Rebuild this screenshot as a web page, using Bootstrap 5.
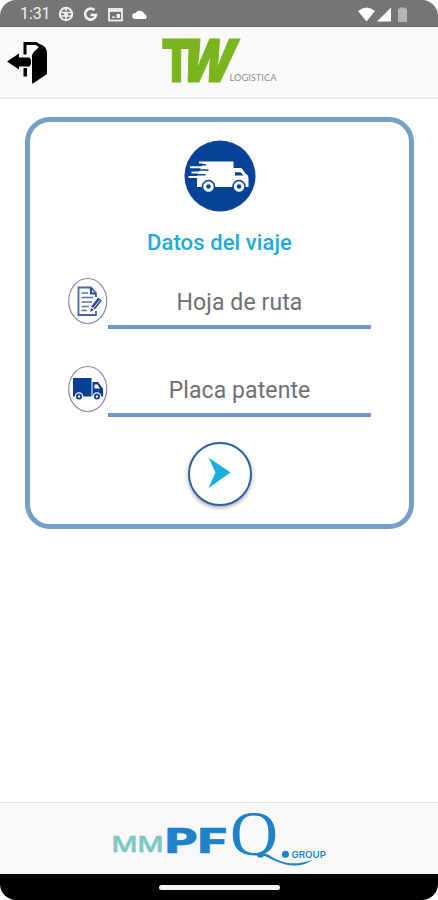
<!DOCTYPE html>
<html lang="es">
<head>
<meta charset="utf-8">
<meta name="viewport" content="width=device-width, initial-scale=1">
<title>Datos del viaje</title>
<link href="https://cdn.jsdelivr.net/npm/bootstrap@5.3.0/dist/css/bootstrap.min.css" rel="stylesheet">
<style>
body{font-family:Roboto,sans-serif;background:#fff}
svg{display:block;flex:none;overflow:visible}
.phone{width:438px;height:900px}
.statusbar{height:27px;background:#757575;border-bottom:1px solid #686868;border-radius:16px 16px 0 0;padding:1px 30px 0 20px;color:#f1f1f1}
.clock{font-size:16px;letter-spacing:-.1px;line-height:26px;width:38px}
.topbar{height:72px;background:#f9f9f9;border-bottom:2px solid #ececec}
.trip{margin:18px 24px 0 25px;height:412px;border:5px solid #759fc9;border-radius:25px;padding-top:18px}
.trip h1{font-size:22px;line-height:28px;letter-spacing:.1px;color:#22abd6;margin:17px 0 0;font-weight:500}
.field{padding:0 38px;height:51px}
.field .form-control{width:263px;height:51px;border:0;border-bottom:4px solid #6e99c8;border-radius:0;background:none;padding:2px 0 0;text-align:center;font-size:23px;letter-spacing:.1px;color:#666;box-shadow:none}
.field .form-control::placeholder{color:#707070;opacity:1}
.go{width:64px;height:64px;border:2px solid #2c62a7;background:#fff;box-shadow:0 2px 4px #0005}
.brandbar{height:72px;background:#f8f8f8;border-top:1px solid #e6e6e6}
.navpill{height:26px;background:#000;border-radius:0 0 16px 16px}
.navpill span{width:121px;height:5px;background:#f2f2f2}
</style>
<script src="https://cdn.jsdelivr.net/npm/bootstrap@5.3.0/dist/js/bootstrap.bundle.min.js"></script>
</head>
<body>
<div class="phone d-flex flex-column overflow-hidden">
  <div class="statusbar d-flex align-items-center flex-shrink-0">
    <span class="clock">1:31</span>
    <svg width="92" height="26" viewBox="58 0 92 26" fill="none" stroke="#f1f1f1" stroke-width="2">
      <circle cx="66" cy="13" r="6.2"/><path d="M60 11.500h12M60 15h12M66 7v3M66 15v4" stroke-width="1.600"/><circle cx="66" cy="13" r="2" fill="#f1f1f1" stroke="none"/>
      <path d="M94.500 9.200A5.500 5.500 0 1 0 96 14H90.500" stroke-width="2.600"/>
      <rect x="109" y="8" width="13" height="11.500" stroke-width="1.800"/><path d="M109 9.800h13" stroke-width="2"/><path d="M112 16.200h3" stroke-width="1.400"/><path d="M116.500 13h3.500v4h-3.500z" fill="#f1f1f1" stroke="none"/>
      <path d="M135 18a3 3 0 0 1 .5-6 5 5 0 0 1 8.700.8 3 3 0 0 1 1.500 5.200z" fill="#fff" stroke="none"/>
    </svg>
    <svg class="ms-auto" width="51" height="26" viewBox="357 0 51 26" fill="#fff">
      <path d="M358 10q8.500-7 17 0l-8.500 10.500zM391 6.500v14h-14z"/><path d="M398 7.500h2V6.500h5v1h2V21h-9z" fill="#b5b5b5"/>
    </svg>
  </div>

  <header class="topbar d-flex flex-shrink-0">
    <svg width="438" height="70" viewBox="0 27 438 70">
      <path d="M7 61.500 19 53.500V57.500H29.500L31 60V64L29.500 66.500H19V69.500z"/>
      <path d="M25 54.500V43.500H36L45 49" fill="none" stroke="#000" stroke-width="3"/>
      <path d="M23.500 68H27V76.500H23.500zM32 55Q33 52 37 49L41 44.500Q47 47 47 53V74L33 83.500H32z"/>
      <g fill="#7ab51d" stroke="#7ab51d" stroke-width="1" font-family="Inter,sans-serif" font-weight="900">
        <text x="161.500" y="81.500" font-size="59" textLength="30" lengthAdjust="spacingAndGlyphs">T</text>
        <text transform="translate(177.500 81.500) skewX(-14)" font-size="59" textLength="53" lengthAdjust="spacingAndGlyphs">W</text>
      </g>
      <text x="229.500" y="81" font-family="Lato,sans-serif" font-size="9" fill="#919191" textLength="47" lengthAdjust="spacingAndGlyphs">LOGISTICA</text>
    </svg>
  </header>

  <main class="flex-grow-1">
    <section class="trip d-flex flex-column align-items-center">
      <svg width="72" height="72" viewBox="184 140 72 72">
        <circle cx="220" cy="176" r="35.500" fill="#064399"/>
        <path d="M199 161.500H233.500V168H241.500L246 174Q248.500 175 248.500 178V187H197V175.500L203 163.500H199z" fill="#fff"/>
        <path d="M195 164.700H206M195 170H208.500M195 174.800H205.500" stroke="#064399" stroke-width="1.600" fill="none"/>
        <path d="M190 167.300H208M191.500 172.400H210M188.500 177H204" stroke="#fff" stroke-width="2" fill="none"/>
        <path d="M235 172.300H240.500L243.500 175.500H235z" fill="#064399"/>
        <g fill="#fff" stroke="#064399" stroke-width="1.500"><circle cx="208.500" cy="186.500" r="6"/><circle cx="239" cy="186.500" r="6"/></g>
        <g fill="#064399"><circle cx="208.500" cy="186.500" r="2.200"/><circle cx="239" cy="186.500" r="2.200"/></g>
      </svg>
      <h1>Datos del viaje</h1>
      <div class="field d-flex w-100" style="margin-top:21px">
        <svg width="40" height="47" viewBox="0 0 40 47" fill="none" stroke="#2c4b98">
          <ellipse cx="19.700" cy="23" rx="19" ry="22.500" stroke="#8589b5" stroke-width="1.200"/>
          <path d="M28 19V15L23 9.500H10.500V37H28V33" stroke-width="1.800" stroke="#4965a5"/><path d="M23 9.500V15.500H28" stroke-width="2.200"/>
          <path d="M13.500 15H20M13.500 19.500H25M13.500 24H24M13.500 28.500H21M13.500 32.500H19" stroke-width="1.700" stroke="#5874ae"/>
          <path d="M25 30 32 21" stroke-width="4.800"/><path d="M25.500 30 32 22" stroke="#d7dff0" stroke-width="1"/><path d="M22 34l1-4 3 2z" fill="#2c4b98" stroke="none"/>
        </svg>
        <input class="form-control" type="text" placeholder="Hoja de ruta" aria-label="Hoja de ruta">
      </div>
      <div class="field d-flex w-100" style="margin-top:37px">
        <svg width="40" height="47" viewBox="0 0 40 47">
          <ellipse cx="19.700" cy="23" rx="19" ry="22.500" fill="none" stroke="#8589b5" stroke-width="1.200"/>
          <path d="M5 12H23.500V30.500H5zM24.500 16H30L35 22.500V30.500H24.500z" fill="#083f96"/>
          <path d="M26.500 18.500H29.500L32 22.500H26.500z" fill="#fff"/>
          <g fill="#083f96" stroke="#fff" stroke-width="1.300"><circle cx="11" cy="30.500" r="3.700"/><circle cx="29" cy="30.500" r="3.700"/></g>
          <g fill="#fff"><circle cx="11" cy="30.500" r="1.200"/><circle cx="29" cy="30.500" r="1.200"/></g>
        </svg>
        <input class="form-control" type="text" placeholder="Placa patente" aria-label="Placa patente">
      </div>
      <button class="go btn rounded-circle p-0 d-flex align-items-center justify-content-center flex-shrink-0" style="margin-top:25px" type="button" aria-label="Continuar">
        <svg width="60" height="60" viewBox="190 444 60 60"><path d="M208.500 457.500 230.500 472.500 208.500 488 215.500 472.500z" fill="#18b0dc"/></svg>
      </button>
    </section>
  </main>

  <footer class="flex-shrink-0">
    <div class="brandbar">
      <svg width="438" height="71" viewBox="0 803 438 71" fill="#1d82c8">
        <clipPath id="bowl"><path d="M228 804H282V852H270L262 857.500H228z"/></clipPath>
        <text x="111.500" y="852" font-family="Inter,sans-serif" font-weight="500" font-size="21" fill="#7bc7c5" stroke="#7bc7c5" stroke-width=".4" textLength="52" lengthAdjust="spacingAndGlyphs">MM</text>
        <text x="165" y="852.500" font-family="Inter,sans-serif" font-weight="800" font-size="34.500" stroke="#1d82c8" stroke-width=".6" textLength="62" lengthAdjust="spacingAndGlyphs">PF</text>
        <text x="230" y="854.500" font-family="'Liberation Serif',serif" font-size="63" clip-path="url(#bowl)" textLength="48" lengthAdjust="spacingAndGlyphs">Q</text>
        <path d="M259 853.500Q264 852 268 854.500C279 862 292 867 312 860Q306 865 296 865.500C281 866 271 858 259 853.500z"/>
        <circle cx="285.500" cy="854.300" r="3.500"/>
        <text x="291.500" y="857.800" font-family="Inter,sans-serif" font-weight="600" font-size="9.500" textLength="34.500" lengthAdjust="spacingAndGlyphs">GROUP</text>
      </svg>
    </div>
    <div class="navpill d-flex align-items-center justify-content-center"><span class="rounded-pill"></span></div>
  </footer>
</div>
</body>
</html>
